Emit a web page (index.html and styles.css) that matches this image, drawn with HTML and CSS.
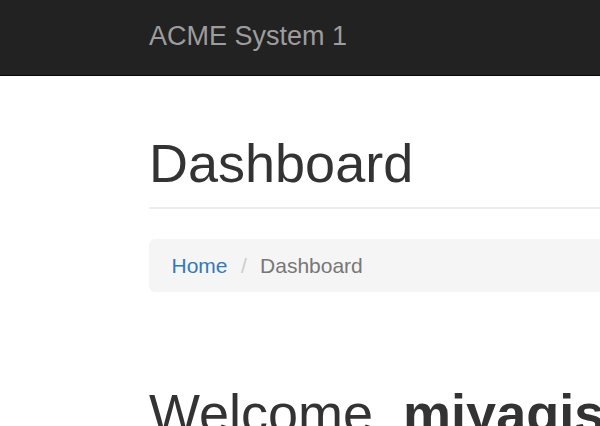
FILE: index.html
```html
<!DOCTYPE html>
<html lang="en">
<head>
<meta charset="utf-8">
<title>Dashboard</title>
<link rel="stylesheet" href="styles.css">
</head>
<body>
<nav class="navbar">
  <div class="container">
    <a class="brand" href="#">ACME System 1</a>
  </div>
</nav>
<main class="container">
  <h1 class="page-header">Dashboard</h1>
  <ol class="breadcrumb">
    <li><a href="#">Home</a></li>
    <li class="active">Dashboard</li>
  </ol>
  <h1 class="welcome">Welcome, <strong>miyagisan</strong></h1>
</main>
</body>
</html>
```

FILE: styles.css
```css
html, body {
  margin: 0;
  padding: 0;
  overflow: hidden;
}
body {
  font-family: "Liberation Sans", Arial, sans-serif;
  color: #333;
  background: #fff;
}
.container {
  width: 1710px;
  margin-left: 126.5px;
  padding: 0 22.5px;
}
.navbar {
  background: #222;
  height: 75px;
  border-bottom: 1px solid #080808;
}
.brand {
  display: block;
  padding-top: 21px;
  font-size: 27px;
  line-height: 30px;
  color: #9d9d9d;
  text-decoration: none;
}
.page-header {
  margin: 58px 0 30px;
  padding-bottom: 13.5px;
  font-size: 54px;
  line-height: 59.4px;
  font-weight: 500;
  border-bottom: 2px solid #eee;
}
.breadcrumb {
  list-style: none;
  margin: 0;
  padding: 12px 22.5px 11px;
  background: #f5f5f5;
  border-radius: 6px;
  font-size: 21px;
  line-height: 30px;
}
.breadcrumb li {
  display: inline-block;
}
.breadcrumb li + li::before {
  content: "/\00a0";
  padding: 0 7.5px;
  color: #ccc;
}
.breadcrumb a {
  color: #337ab7;
  text-decoration: none;
}
.breadcrumb .active {
  color: #777;
}
.welcome {
  margin: 92px 0 0;
  font-size: 54px;
  line-height: 59.4px;
  font-weight: 500;
  white-space: nowrap;
}
.welcome strong {
  font-weight: 700;
}
```
